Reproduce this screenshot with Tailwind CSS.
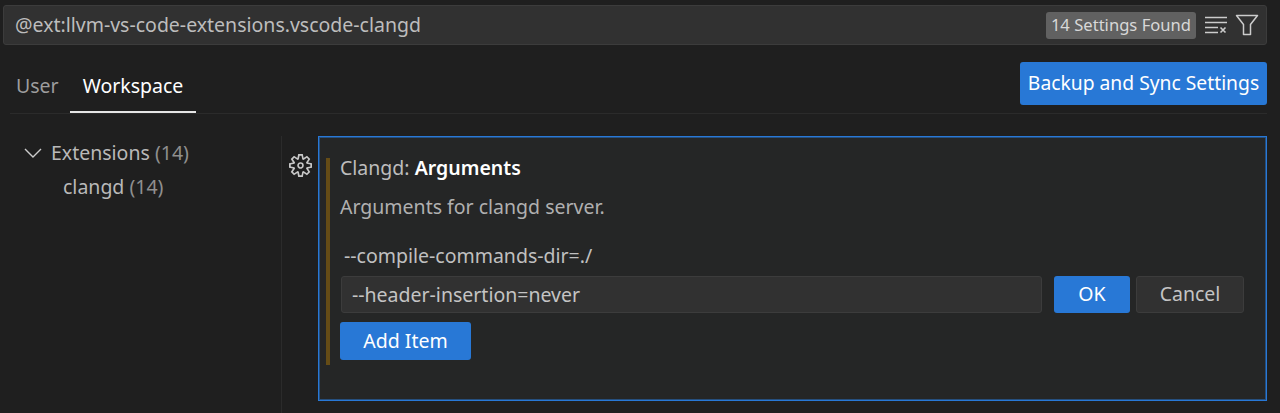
<!DOCTYPE html>
<html><head><meta charset="utf-8"><script src="https://cdn.jsdelivr.net/npm/@tailwindcss/browser@4"></script></head>
<body class="m-0 h-[413px] w-[1280px] overflow-hidden bg-[#1f1f1f] font-['Noto_Sans',sans-serif] text-[19.5px] text-[#cccccc]">
<div class="pl-[3px] pt-[5px] pr-[13px]">
  <div class="flex h-[40px] items-center rounded-[3px] border border-[#3c3c3c] bg-[#313131] pl-[11px] pr-[7px]">
    <span class="flex-1 text-[#bdbdbd]">@ext:llvm-vs-code-extensions.vscode-clangd</span>
    <span class="rounded-[3px] bg-[#616161] px-[5px] pb-[1px] text-[16.6px] leading-[26px] text-[#d8d8d8]">14 Settings Found</span>
    <svg class="ml-[8px]" width="24" height="24" viewBox="0 0 24 24" fill="none" stroke="#cccccc" stroke-width="1.4"><path d="M1 4.5h22M1 9.5h22M1 14.5h13M1 19.5h13"/><path d="M16.5 14.5l5 5M21.5 14.5l-5 5" stroke-width="1.6"/></svg>
    <svg class="ml-[7px]" width="24" height="24" viewBox="0 0 24 24" fill="none" stroke="#cccccc" stroke-width="1.5"><path d="M1.5 2.5h21l-7 9v10h-7v-10z" stroke-linejoin="round"/></svg>
  </div>
</div>
<div class="ml-[10px] mr-[13px] mt-[17px] flex h-[52px] items-start justify-between border-b border-[#2b2b2b]">
  <div class="flex items-start">
    <span class="flex h-[51px] items-center border-b-2 border-transparent pb-[1px] px-[6px] text-[#9d9d9d]">User</span>
    <span class="ml-[5px] flex h-[51px] items-center border-b-2 border-[#e5e5e5] pb-[1px] px-[13px] text-[#ffffff]">Workspace</span>
  </div>
  <button class="h-[43px] w-[247px] rounded-[3px] bg-[#2878d6] text-[19.3px] text-[#ffffff]">Backup and Sync Settings</button>
</div>
<div class="mt-[22px] flex">
  <div class="h-[277px] w-[282px] border-r border-[#2b2b2b] pl-[22px]">
    <div class="flex h-[33px] items-center text-[#b9b9b9]">
      <svg width="22" height="22" viewBox="0 0 22 22" fill="none" stroke="#cccccc" stroke-width="1.4"><path d="M3 7l8 8 8-8"/></svg>
      <span class="ml-[7px]">Extensions <span class="text-[#8f8f8f]">(14)</span></span>
    </div>
    <div class="ml-[41px] flex h-[35px] items-center text-[#b9b9b9]"><span>clangd <span class="text-[#8f8f8f]">(14)</span></span></div>
  </div>
  <div class="flex w-[36px] justify-center pl-[1px] pt-[18px]">
    <svg class="h-[23px] w-[23px]" viewBox="0 0 24 24" fill="#c8c8c8"><path fill-rule="evenodd" clip-rule="evenodd" d="M19.85 8.75l4.15.83v4.84l-4.15.83 2.35 3.52-3.43 3.43-3.52-2.35-.83 4.15H9.58l-.83-4.15-3.52 2.35-3.43-3.43 2.35-3.52L0 14.42V9.58l4.15-.83L1.8 5.23 5.23 1.8l3.52 2.35L9.58 0h4.84l.83 4.15 3.52-2.35 3.43 3.43-2.35 3.52zm-1.57 5.07l4-.81v-2l-4-.81-.54-1.3 2.29-3.43-1.43-1.43-3.43 2.29-1.3-.54-.81-4h-2l-.81 4-1.3.54-3.43-2.29-1.43 1.43L6.38 8.9l-.54 1.3-4 .81v2l4 .81.54 1.3-2.29 3.43 1.43 1.43 3.43-2.29 1.3.54.81 4h2l.81-4 1.3-.54 3.43 2.29 1.43-1.43-2.29-3.43.54-1.3zm-8.186-4.672A3.43 3.43 0 0 1 12 8.57 3.44 3.44 0 0 1 15.43 12a3.43 3.43 0 1 1-5.336-2.852zm.956 4.274c.281.188.612.288.95.288A1.7 1.7 0 0 0 13.71 12a1.71 1.71 0 1 0-2.66 1.422z"/></svg>
  </div>
  <div class="h-[265px] w-[949px] border border-[#2878d6] bg-[#252626] pl-[7px] pt-[21px] shadow-[inset_0_0_0_1px_#2878d680]">
    <div class="h-[207px] border-l-[4px] border-[#654c16] pl-[10px]">
      <div class="leading-[20px] text-[#bdbdbd]">Clangd: <span class="font-semibold text-[#ffffff]">Arguments</span></div>
      <div class="mt-[14px] text-[#b0b0b0]">Arguments for clangd server.</div>
      <div class="mt-[18px] pl-[4px] leading-[34px] text-[#c0c0c0]">--compile-commands-dir=./</div>
      <div class="mt-[3px] flex gap-[6px] pl-[1px]">
        <div class="flex h-[37px] w-[701px] items-center rounded-[3px] border border-[#3c3c3c] bg-[#313131] pl-[10px] text-[#c4c4c4]">--header-insertion=never</div>
        <button class="ml-[6px] h-[37px] w-[76px] rounded-[3px] bg-[#2878d6] pb-[2px] text-[#ffffff]">OK</button>
        <button class="h-[37px] w-[108px] rounded-[3px] border border-[#3c3c3c] bg-[#313131] pb-[2px] text-[#c4c4c4]">Cancel</button>
      </div>
      <button class="mt-[9px] h-[38px] w-[131px] rounded-[3px] bg-[#2878d6] pb-[2px] text-[#ffffff]">Add Item</button>
    </div>
  </div>
</div>
</body></html>
